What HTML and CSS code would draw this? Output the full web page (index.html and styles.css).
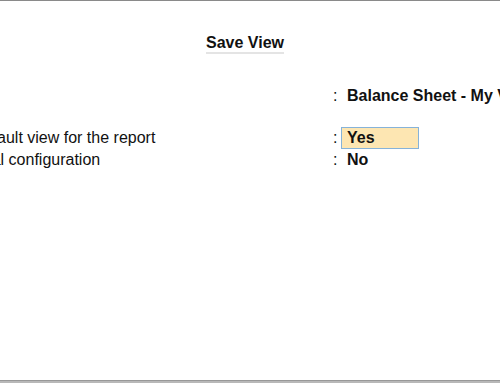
FILE: index.html
```html
<!DOCTYPE html>
<html>
<head>
  <title>Save View</title>
  <link rel="stylesheet" href="styles.css">
</head>
<body>
  <div class="screen">
    <div class="panel">
      <div class="title-row">
        <span class="title">Save View</span>
      </div>

      <div class="form">
        <div class="row row-name">
          <span class="label">Name of view</span>
          <span class="colon">:</span>
          <span class="value">Balance Sheet - My View</span>
        </div>
        <div class="row">
          <span class="label">Set as default view for the report</span>
          <span class="colon">:</span>
          <span class="value active">Yes</span>
        </div>
        <div class="row">
          <span class="label">Use Global configuration</span>
          <span class="colon">:</span>
          <span class="value">No</span>
        </div>
      </div>
    </div>
    <div class="status-line"></div>
  </div>
</body>
</html>
```

FILE: styles.css
```css
body {
  margin: 0;
  padding: 0;
  background-color: white;
  color: #111;
  font-family: "Liberation Sans", Arial, sans-serif;
  font-size: 16px;
  overflow: hidden;
}

.screen {
  height: 383px;
  display: flex;
  flex-direction: column;
  border-top: 1px solid #8a8a8a;
  box-sizing: border-box;
}

.panel {
  flex: 1;
  overflow: hidden;
}

.title-row {
  padding-left: 206px;
  margin-top: 32px;
}

.title {
  display: inline-block;
  font-weight: bold;
  line-height: 19px;
  border-bottom: 2px solid #e4e4e4;
}

.form {
  margin-top: 31px;
  margin-left: -75px;
}

.row {
  display: flex;
  height: 22px;
  line-height: 22px;
  white-space: nowrap;
}

.row-name {
  margin-bottom: 20px;
}

.row-name .label {
  visibility: hidden;
}

.label {
  width: 408px;
  flex-shrink: 0;
}

.colon {
  width: 8px;
  flex-shrink: 0;
}

.value {
  font-weight: bold;
  padding-left: 5px;
  border: 1px solid transparent;
  line-height: 20px;
  box-sizing: border-box;
}

.value.active {
  width: 78px;
  background-color: #fde6b2;
  border-color: #86b3d9;
}

.status-line {
  height: 3px;
  border-top: 1px solid #989898;
  background-color: #b8b8b8;
  box-sizing: border-box;
}
```
